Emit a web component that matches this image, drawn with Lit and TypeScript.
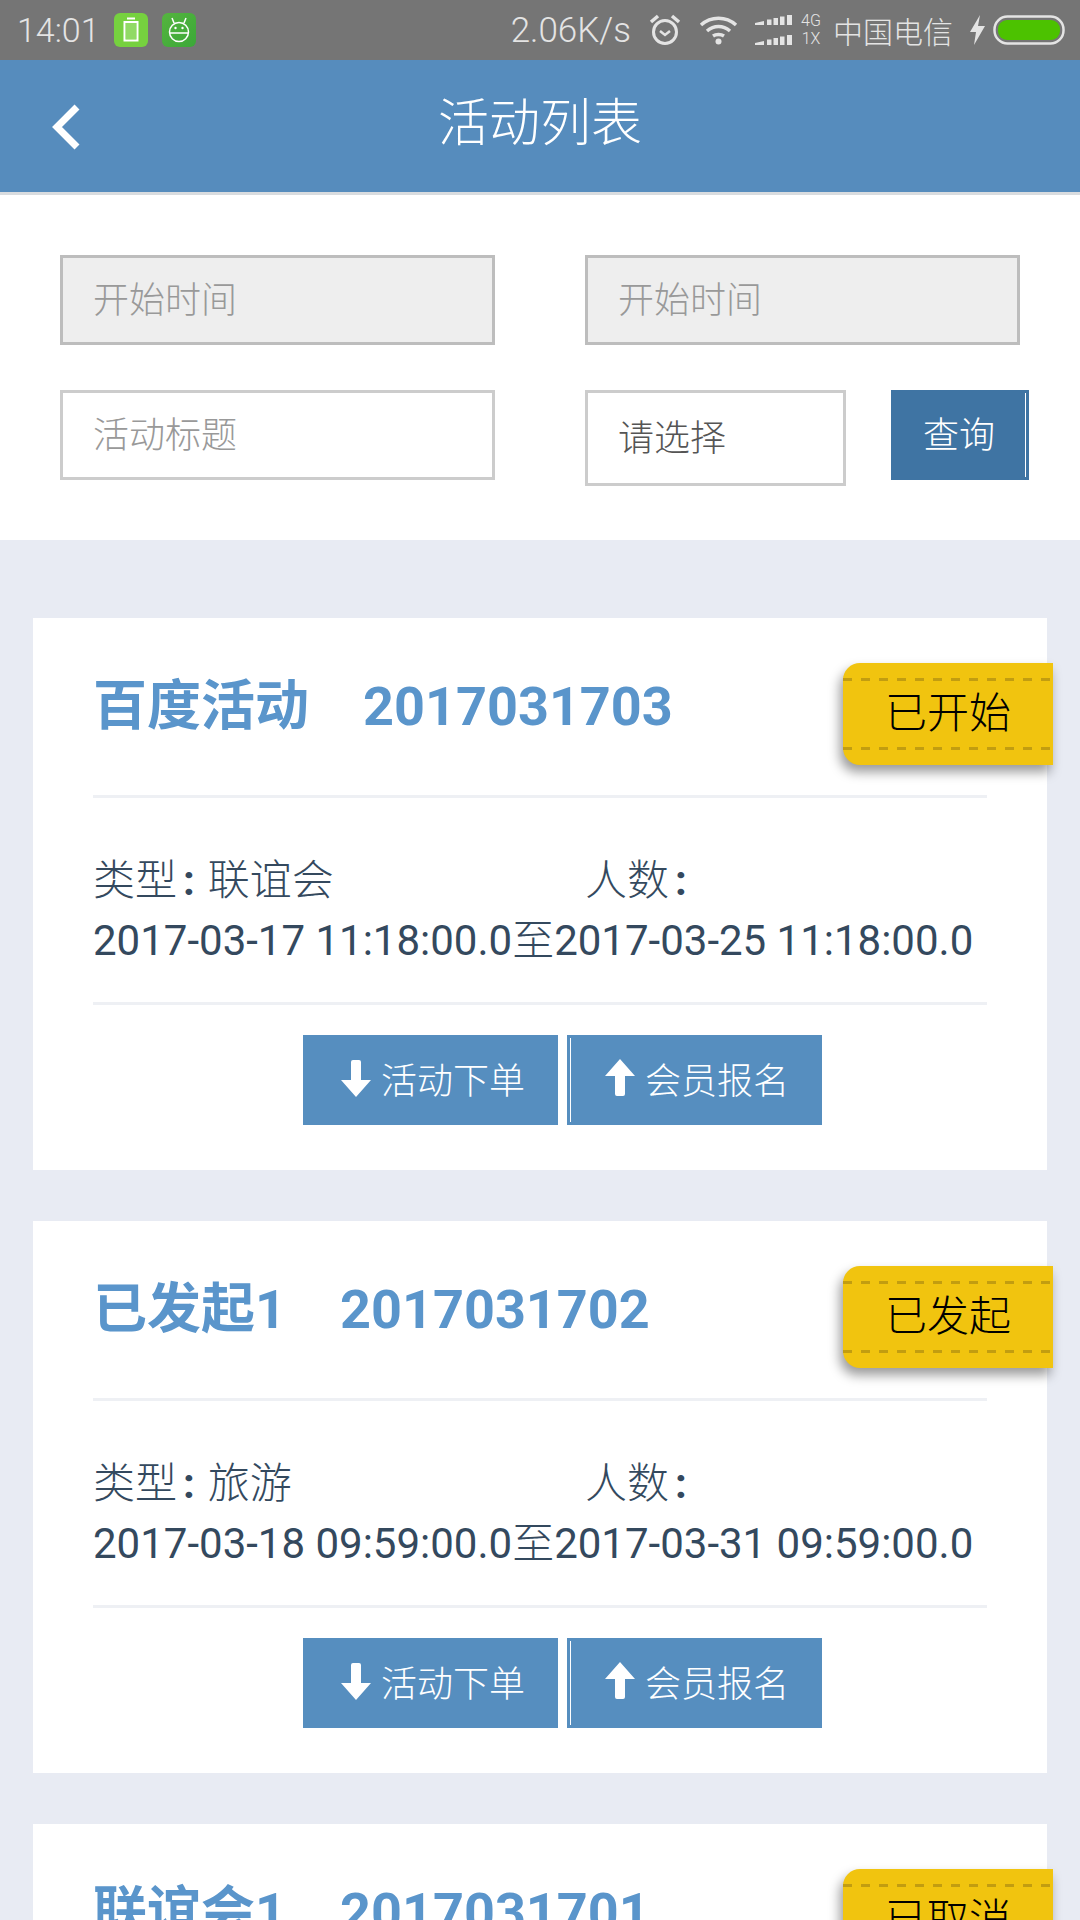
import { LitElement, html, css } from "lit";
import { customElement } from "lit/decorators.js";

const down = html`<svg class="arrow" viewBox="0 0 30 38" width="30" height="38"><path d="M10 3a2 2 0 0 1 2-2h6a2 2 0 0 1 2 2v18h10L15 38 0 21h10z" fill="#fff"/></svg>`;
const up = html`<svg class="arrow" viewBox="0 0 30 38" width="30" height="38"><path d="M10 35a2 2 0 0 0 2 2h6a2 2 0 0 0 2-2V17h10L15 0 0 17h10z" fill="#fff"/></svg>`;

const items = [
  { t: "百度活动", c: "2017031703", s: "已开始", k: "联谊会", from: "2017-03-17 11:18:00.0", to: "2017-03-25 11:18:00.0" },
  { t: "已发起1", c: "2017031702", s: "已发起", k: "旅游", from: "2017-03-18 09:59:00.0", to: "2017-03-31 09:59:00.0" },
  { t: "联谊会1", c: "2017031701", s: "已取消", k: "联谊会", from: "", to: "" },
];

@customElement("app-root")
export class AppRoot extends LitElement {
  static styles = css`
    :host { display: block; width: 1080px; height: 1920px; overflow: hidden; background: #e8ebf3;
      font-family: Roboto, "Noto Sans CJK SC", sans-serif; }
    .status { height: 60px; background: #757575; color: #e4e4e4; display: flex; align-items: center; padding: 0 15px 0 17px; box-sizing: border-box; }
    .status .sp { flex: 1; }
    .time { width: 79px; font-weight: 300; font-size: 34px; }
    .appi { width: 34px; height: 34px; border-radius: 6px; display: flex; align-items: center; justify-content: center; }
    .a1 { background: #76d13f; margin-left: 18px; }
    .a2 { background: linear-gradient(135deg, #55b43f, #3ba838); margin-left: 14px; }
    .speed { font-weight: 300; font-size: 35px; }
    .net { display: flex; flex-direction: column; font-size: 16px; line-height: 18px; width: 20px; margin-left: 8px; text-align: center; font-weight: 300; }
    .carrier { font-size: 30px; margin-left: 12px; width: 120px; font-weight: 300; white-space: nowrap; }
    .alarm { margin-left: 18px; } .wifi { margin-left: 18px; } .sig { margin-left: 17px; } .bolt { margin-left: 16px; } .bat { margin-left: 7px; }
    .nav { height: 135px; box-sizing: border-box; background: #568cbd; border-bottom: 3px solid #d9dcdf; display: flex; align-items: center; justify-content: center; position: relative; color: #fff; font-size: 51px; font-weight: 300; padding: 0 0 14px 0; }
    .back { position: absolute; left: 51px; top: 44px; }
    .form { background: #fff; height: 345px; box-sizing: border-box; padding: 60px 0 0 60px; display: flex; flex-direction: column; gap: 45px; }
    .row { display: flex; align-items: flex-start; }
    .field { box-sizing: border-box; width: 435px; height: 90px; border: 3px solid #ccc; display: flex; align-items: center; padding: 0 0 7px 30px; font-size: 36px; color: #999; font-weight: 300; }
    .field.dis { background: #eee; border-color: #bdbdbd; }
    .ml { margin-left: 90px; }
    .sel { width: 261px; height: 96px; color: #555; padding-bottom: 7px; }
    .query { box-sizing: border-box; position: relative; width: 138px; height: 90px; margin-left: 45px; background: #3f74a3; color: #fff; font-size: 36px; font-weight: 300; display: flex; align-items: center; justify-content: center; padding: 0 2px 6px 0; }
    .vline { position: absolute; top: 3px; bottom: 3px; width: 1px; background: #fff; }
    .query .vline { right: 3px; }
    .list { padding: 78px 33px 0; display: flex; flex-direction: column; gap: 51px; }
    .card { position: relative; background: #fff; height: 552px; flex: none; }
    .head { height: 177px; box-sizing: border-box; padding: 0 60px; display: flex; align-items: baseline; gap: 54px; font-size: 54px; line-height: 177px; font-weight: 700; color: #5a95cb; white-space: nowrap; }
    .rule { height: 3px; margin: 0 60px; background: #eef0f4; }
    .badge { position: absolute; left: 810px; top: 45px; width: 210px; height: 102px; box-sizing: border-box; background: #f1c40f; border-radius: 17px 0 0 17px; box-shadow: -3px 7px 12px rgba(0,0,0,.4); display: flex; align-items: center; justify-content: center; color: #000; font-size: 42px; font-weight: 300; padding-bottom: 10px; }
    .dash { position: absolute; left: 0; right: 0; height: 3px; background: repeating-linear-gradient(90deg, #c29d10 0 9px, transparent 9px 18px); }
    .d1 { top: 15px; } .d2 { top: 84px; }
    .info { box-sizing: border-box; height: 204px; padding: 53px 0 0 60px; font-size: 42px; line-height: 60px; color: #34495e; white-space: nowrap; }
    .meta { display: flex; font-weight: 300; }
    .meta span { width: 492px; flex: none; }
    .meta b { font-weight: 700; margin: 0 13px 0 6px; }
    .to { font-weight: 300; }
    .acts { display: flex; gap: 9px; padding: 30px 0 0 270px; }
    .btn { box-sizing: border-box; position: relative; width: 255px; height: 90px; background: #568ebf; color: #fff; font-size: 36px; font-weight: 300; display: flex; align-items: center; justify-content: center; gap: 10px; padding: 0 0 4px 5px; }
    .btn .vline { left: 3px; }
  `;

  private statusBar() {
    return html`<div class="status">
      <span class="time">14:01</span>
      <span class="appi a1"><svg width="16" height="26" viewBox="0 0 16 26"><path d="M4 1.500h8M1.500 5h13v18.500h-13z" fill="none" stroke="#fff" stroke-width="2"/><rect x="3" y="6" width="10" height="16" fill="#fff" opacity=".2"/></svg></span>
      <span class="appi a2"><svg width="24" height="28" viewBox="0 0 24 28" fill="none" stroke="#fff" stroke-width="1.500"><path d="M5 2l2 5M19 2l-2 5M2.500 16a9.500 9.500 0 0 1 19 0 9.500 9.500 0 0 1-19 0zM2.500 17h19"/><circle cx="8.500" cy="12" r="1.200" fill="#fff" stroke="none"/><circle cx="15.500" cy="12" r="1.200" fill="#fff" stroke="none"/></svg></span>
      <span class="sp"></span>
      <span class="speed">2.06K/s</span>
      <svg class="alarm" width="32" height="34" viewBox="0 0 32 34" fill="none" stroke="#e4e4e4" stroke-width="3"><circle cx="16" cy="19" r="11.500"/><path d="M11 18l5 4 5-4" stroke-width="2.500"/><path d="M2 9l7-6M30 9l-7-6" stroke-width="3.500"/></svg>
      <svg class="wifi" width="39" height="30" viewBox="0 0 39 30" fill="none" stroke="#e4e4e4" stroke-width="3.500"><path d="M2 10c10-9 25-9 35 0M8 16c7-6 16-6 23 0M14 21c3-2 8-2 11 0"/><circle cx="19.500" cy="26.500" r="3" fill="#e4e4e4" stroke="none"/></svg>
      <svg class="sig" width="38" height="34" viewBox="0 0 38 34" fill="#e4e4e4"><path d="M0 10l9-2v4H0zM12 6.500h4.500V12H12zM18.500 5H23v7h-4.500zM25 3.500h4.500V12H25zM32 2h5v10h-5zM0 30l9-2v4H0zM12 26.500h4.500V32H12zM18.500 25H23v7h-4.500zM25 23.500h4.500V32H25zM32 22h5v10h-5z"/></svg>
      <span class="net"><span>4G</span><span>1X</span></span>
      <span class="carrier">中国电信</span>
      <svg class="bolt" width="17" height="32" viewBox="0 0 17 32"><path d="M11 1L1 18h6L5 31 16 12H9z" fill="#e4e4e4"/></svg>
      <svg class="bat" width="72" height="30" viewBox="0 0 72 30"><rect x="1.500" y="1.500" width="69" height="27" rx="13" fill="none" stroke="#e4e4e4" stroke-width="2.500"/><rect x="5" y="5" width="62" height="20" rx="9" fill="#4cc200"/></svg>
    </div>`;
  }

  private card(i: (typeof items)[number]) {
    return html`<div class="card">
      <div class="head"><span>${i.t}</span><span>${i.c}</span></div>
      <div class="badge"><i class="dash d1"></i><i class="dash d2"></i>${i.s}</div>
      <div class="rule"></div>
      <div class="info">
        <div class="meta"><span>类型<b>:</b>${i.k}</span><span>人数<b>:</b></span></div>
        <div>${i.from}<span class="to">至</span>${i.to}</div>
      </div>
      <div class="rule"></div>
      <div class="acts">
        <div class="btn">${down}活动下单</div>
        <div class="btn"><i class="vline"></i>${up}会员报名</div>
      </div>
    </div>`;
  }

  render() {
    return html`
      ${this.statusBar()}
      <div class="nav">
        <svg class="back" width="30" height="46" viewBox="0 0 30 46"><path d="M26 3L6 23l20 20" fill="none" stroke="#fff" stroke-width="7"/></svg>
        活动列表
      </div>
      <div class="form">
        <div class="row">
          <div class="field dis">开始时间</div>
          <div class="field dis ml">开始时间</div>
        </div>
        <div class="row">
          <div class="field">活动标题</div>
          <div class="field ml sel">请选择</div>
          <div class="query">查询<i class="vline"></i></div>
        </div>
      </div>
      <div class="list">${items.map((i) => this.card(i))}</div>
    `;
  }
}
